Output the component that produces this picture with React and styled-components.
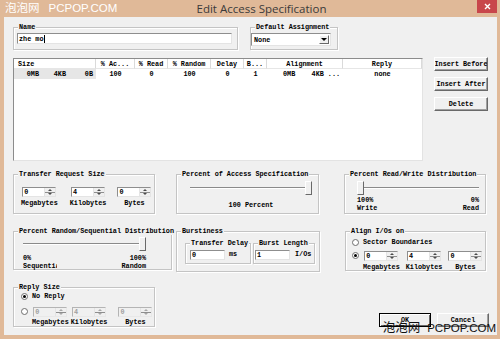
import React from "react";
import styled, { createGlobalStyle } from "styled-components";

const MONO = `"Liberation Mono", "DejaVu Sans Mono", monospace`;
const MARK = `"Liberation Sans", "Noto Sans CJK SC", sans-serif`;

const GlobalStyle = createGlobalStyle`
  html, body {
    margin: 0;
    padding: 0;
  }
  body {
    width: 500px;
    height: 339px;
    overflow: hidden;
    background: #e0b998;
  }
`;

const Window = styled.div`
  position: relative;
  width: 500px;
  height: 339px;
  display: flex;
  flex-direction: column;
  background: #e0b998;
  overflow: hidden;
`;

const TitleBar = styled.div`
  display: flex;
  height: 17px;
  flex-shrink: 0;
`;

const Title = styled.div`
  flex: 1;
  padding-left: 46px;
  display: flex;
  align-items: center;
  justify-content: center;
  font-family: "Open Sans", "Noto Sans", sans-serif;
  font-size: 11.5px;
  color: #3a3a3a;
`;

const CloseButton = styled.div`
  width: 20px;
  height: 13px;
  margin-right: 3px;
  background: #c8464b;
  display: flex;
  align-items: center;
  justify-content: center;
`;

const TopMark = styled.div`
  position: absolute;
  left: 5px;
  top: 2px;
  font-family: ${MARK};
  font-size: 11.5px;
  line-height: 13px;
  color: #fff;
  white-space: nowrap;
  pointer-events: none;
`;

const BottomMark = styled.div`
  position: absolute;
  right: 4px;
  bottom: 3px;
  font-family: ${MARK};
  font-size: 11.5px;
  line-height: 15px;
  color: #111;
  white-space: nowrap;
  pointer-events: none;
`;

const MarkCjk = styled.span`
  font-size: ${p => p.$size}px;
  margin-right: ${p => p.$gap}px;
`;

const Client = styled.div`
  flex: 1;
  margin: 0 3px 4px 4px;
  padding-left: 9px;
  background: #f0f0f0;
  display: flex;
  flex-direction: column;
  font-family: ${MONO};
  font-size: 6.8px;
  font-weight: bold;
  line-height: 8px;
  color: #000;
`;

const Row = styled.div`
  display: flex;
  align-items: ${p => p.$align || "flex-start"};
  flex-shrink: 0;
  margin-top: ${p => p.$mt}px;
  height: ${p => p.$h}px;
`;

const Group = styled.div`
  position: relative;
  box-sizing: border-box;
  flex-shrink: 0;
  display: flex;
  flex-direction: ${p => (p.$row ? "row" : "column")};
  align-items: flex-start;
  width: ${p => p.$w}px;
  height: ${p => p.$h}px;
  margin-left: ${p => p.$ml || 0}px;
  padding: ${p => p.$pt || 0}px 0 0 ${p => p.$pl || 0}px;
  border: 1px solid #c4c4c4;
  box-shadow: inset 1px 1px 0 #fff, 1px 1px 0 #fff;
`;

const Legend = styled.span`
  position: absolute;
  top: -5px;
  left: 4px;
  padding: 0 1px;
  background: #f0f0f0;
  white-space: nowrap;
`;

const Line = styled.div`
  display: flex;
  align-items: ${p => p.$align || "center"};
  margin-top: ${p => p.$mt || 0}px;
  white-space: nowrap;
`;

const Text = styled.span`
  margin-left: ${p => p.$ml || 0}px;
  white-space: nowrap;
`;

const Edit = styled.div`
  box-sizing: border-box;
  display: flex;
  align-items: center;
  width: ${p => p.$w}px;
  height: ${p => p.$h || 10}px;
  padding-left: 1px;
  background: #fff;
  border: 1px solid;
  border-color: #8e8e8e #e4e4e4 #e4e4e4 #8e8e8e;
  white-space: pre;
`;

const Caret = styled.span`
  width: 1px;
  height: 8px;
  background: #000;
  margin-left: 1px;
`;

const Select = styled.div`
  box-sizing: border-box;
  display: flex;
  width: 80px;
  height: 13px;
  background: #fff;
  border: 1px solid;
  border-color: #8e8e8e #e4e4e4 #e4e4e4 #8e8e8e;
`;

const SelectValue = styled.div`
  flex: 1;
  display: flex;
  align-items: center;
  padding-left: 2px;
`;

const DropButton = styled.div`
  box-sizing: border-box;
  width: 10px;
  margin: 1px;
  background: #f0f0f0;
  border: 1px solid;
  border-color: #fff #696969 #696969 #fff;
  display: flex;
  align-items: center;
  justify-content: center;

  &::after {
    content: "";
    border-left: 3px solid transparent;
    border-right: 3px solid transparent;
    border-top: 3px solid #000;
  }
`;

const ListView = styled.div`
  box-sizing: border-box;
  width: 410px;
  height: 103px;
  flex-shrink: 0;
  background: #fff;
  border: 1px solid;
  border-color: #8c8c8c #e3e3e3 #e3e3e3 #8c8c8c;
`;

const ListGrid = styled.div`
  display: grid;
  grid-template-columns: 82px 39px 33px 43px 33px 23px 76px 79px;
  grid-auto-rows: 10px;
`;

const HeadCell = styled.div`
  display: flex;
  align-items: center;
  justify-content: ${p => (p.$left ? "flex-start" : "center")};
  padding-left: ${p => (p.$left ? 4 : 0)}px;
  border-right: 1px solid #dadada;
  border-bottom: 1px solid #e6e6e6;
  overflow: hidden;
  white-space: nowrap;
`;

const Cell = styled.div`
  display: flex;
  align-items: center;
  justify-content: ${p => (p.$left ? "flex-start" : "center")};
  padding-left: ${p => p.$pl || 0}px;
  background: ${p => p.$bg || "transparent"};
  overflow: hidden;
  white-space: pre;
`;

const SizeParts = styled.div`
  display: grid;
  grid-template-columns: repeat(3, 27px);
  width: 100%;
  height: 100%;
  background: #e6e6e6;
  align-items: center;

  span {
    text-align: right;
    padding-right: 2px;
  }
`;

const ButtonColumn = styled.div`
  display: flex;
  flex-direction: column;
  gap: 6px;
  margin-left: 11px;
  margin-top: -1px;
`;

const PushButton = styled.div`
  box-sizing: border-box;
  width: ${p => p.$w}px;
  height: 14px;
  margin-left: ${p => p.$ml || 0}px;
  display: flex;
  align-items: center;
  justify-content: center;
  overflow: hidden;
  white-space: nowrap;
  background: #f0f0f0;
  border: 1px solid;
  border-color: ${p => (p.$default ? "#000" : "#fff #696969 #696969 #fff")};
  box-shadow: ${p =>
    p.$default
      ? "inset 1px 1px 0 #fff, inset -1px -1px 0 #696969"
      : "inset -1px -1px 0 #a0a0a0"};
`;

const Field = styled.div`
  display: flex;
  flex-direction: column;
  align-items: center;
  margin-left: ${p => p.$ml || 0}px;
`;

const Caption = styled.div`
  margin-top: ${p => (p.$mt === undefined ? 2 : p.$mt)}px;
  white-space: nowrap;
`;

const Spin = styled.div`
  box-sizing: border-box;
  display: flex;
  width: 34px;
  height: 10px;
  border: 1px solid;
  border-color: ${p =>
    p.$disabled ? "#b4b4b4 #e8e8e8 #e8e8e8 #b4b4b4" : "#8e8e8e #e4e4e4 #e4e4e4 #8e8e8e"};
  background: ${p => (p.$disabled ? "#f0f0f0" : "#fff")};
  color: ${p => (p.$disabled ? "#a0a0a0" : "#000")};
`;

const SpinValue = styled.div`
  flex: 1;
  padding-left: 1px;
  line-height: 8px;
`;

const SpinArrows = styled.div`
  width: 10px;
  display: flex;
  flex-direction: column;
  border-left: 1px solid #e4e4e4;
`;

const SpinStep = styled.div`
  flex: 1;
  display: flex;
  align-items: center;
  justify-content: center;
  background: #f0f0f0;
  border-bottom: ${p => (p.$up ? "1px solid #8e8e8e" : "none")};

  &::after {
    content: "";
    border-left: 2px solid transparent;
    border-right: 2px solid transparent;
    ${p => (p.$up ? "border-bottom" : "border-top")}: 2px solid
      ${p => (p.$disabled ? "#a8a8a8" : "#4a4a4a")};
  }
`;

const Radio = styled.span`
  box-sizing: border-box;
  flex-shrink: 0;
  width: 7px;
  height: 7px;
  margin-top: ${p => p.$mt || 0}px;
  border-radius: 50%;
  border: 1px solid #6e6e6e;
  background: #fff;
  display: inline-flex;
  align-items: center;
  justify-content: center;

  &::after {
    content: "";
    width: 3px;
    height: 3px;
    border-radius: 50%;
    background: ${p => (p.$on ? "#000" : "transparent")};
  }
`;

const SliderColumn = styled.div`
  display: flex;
  flex-direction: column;
  align-items: ${p => p.$align || "stretch"};
  width: ${p => p.$w}px;
`;

const Slider = styled.div`
  position: relative;
  height: 15px;
`;

const Track = styled.div`
  box-sizing: border-box;
  margin-top: 6px;
  height: 2px;
  border-top: 1px solid #8a8a8a;
  border-bottom: 1px solid #fff;
`;

const Thumb = styled.div`
  position: absolute;
  top: 0;
  box-sizing: border-box;
  width: 7px;
  height: 14px;
  background: #f0f0f0;
  border: 1px solid;
  border-color: #fff #696969 #696969 #fff;
`;

const Scale = styled.div`
  display: flex;
  justify-content: space-between;
  margin-top: ${p => p.$mt || 0}px;

  & > div:last-child {
    text-align: right;
  }
`;

const Clip = styled.span`
  display: inline-block;
  width: ${p => p.$w}px;
  overflow: hidden;
  white-space: nowrap;
  vertical-align: top;
`;

const SpinBox = ({ value, disabled }) => (
  <Spin $disabled={disabled}>
    <SpinValue>{value}</SpinValue>
    <SpinArrows>
      <SpinStep $up $disabled={disabled} />
      <SpinStep $disabled={disabled} />
    </SpinArrows>
  </Spin>
);

const SpinField = ({ value, label, ml, disabled, captionMt }) => (
  <Field $ml={ml}>
    <SpinBox value={value} disabled={disabled} />
    <Caption $mt={captionMt}>{label}</Caption>
  </Field>
);

const TrackBar = ({ at }) => (
  <Slider>
    <Track />
    <Thumb style={{ left: at }} />
  </Slider>
);

const columns = ["% Ac...", "% Read", "% Random", "Delay", "B...", "Alignment", "Reply"];

export default function App() {
  return (
    <>
      <GlobalStyle />
      <Window>
        <TitleBar>
          <Title>Edit Access Specification</Title>
          <CloseButton>
            <svg width="7" height="7" viewBox="0 0 7 7">
              <path d="M1 1L6 6M6 1L1 6" stroke="#fff" strokeWidth="1.4" />
            </svg>
          </CloseButton>
        </TitleBar>

        <Client>
          <Row $mt={10} $h={23}>
            <Group $w={225} $h={23} $pt={5} $pl={3}>
              <Legend>Name</Legend>
              <Edit $w={215} $h={11}>
                zhe mo<Caret />
              </Edit>
            </Group>
            <Group $w={88} $h={23} $ml={12} $pt={5}>
              <Legend>Default Assignment</Legend>
              <Select>
                <SelectValue>None</SelectValue>
                <DropButton />
              </Select>
            </Group>
          </Row>

          <Row $mt={8} $h={103}>
            <ListView>
              <ListGrid>
                <HeadCell $left>Size</HeadCell>
                {columns.map(c => (
                  <HeadCell key={c}>{c}</HeadCell>
                ))}
                <Cell>
                  <SizeParts>
                    <span>0MB</span>
                    <span>4KB</span>
                    <span>0B</span>
                  </SizeParts>
                </Cell>
                <Cell>100</Cell>
                <Cell>0</Cell>
                <Cell>100</Cell>
                <Cell>0</Cell>
                <Cell>1</Cell>
                <Cell $left $pl={16}>0MB    4KB ...</Cell>
                <Cell>none</Cell>
              </ListGrid>
            </ListView>
            <ButtonColumn>
              <PushButton $w={54}>Insert Before</PushButton>
              <PushButton $w={54}>Insert After</PushButton>
              <PushButton $w={54}>Delete</PushButton>
            </ButtonColumn>
          </Row>

          <Row $mt={13} $h={40}>
            <Group $w={142} $h={40} $row $pt={12} $pl={7}>
              <Legend>Transfer Request Size</Legend>
              <SpinField value="0" label="Megabytes" />
              <SpinField value="4" label="Kilobytes" ml={12} />
              <SpinField value="0" label="Bytes" ml={11} />
            </Group>
            <Group $w={143} $h={40} $ml={21} $pt={6} $pl={13}>
              <Legend>Percent of Access Specification</Legend>
              <SliderColumn $w={122}>
                <TrackBar at={115} />
                <Caption $mt={5} style={{ textAlign: "center" }}>
                  100 Percent
                </Caption>
              </SliderColumn>
            </Group>
            <Group $w={142} $h={40} $ml={25} $pt={6} $pl={12}>
              <Legend>Percent Read/Write Distribution</Legend>
              <SliderColumn $w={122}>
                <TrackBar at={0} />
                <Scale>
                  <div>
                    100%
                    <br />
                    Write
                  </div>
                  <div>
                    0%
                    <br />
                    Read
                  </div>
                </Scale>
              </SliderColumn>
            </Group>
          </Row>

          <Row $mt={17} $h={41}>
            <Group $w={159} $h={39} $pt={5} $pl={9}>
              <Legend>Percent Random/Sequential Distribution</Legend>
              <SliderColumn $w={123}>
                <TrackBar at={116} />
                <Scale $mt={2}>
                  <div>
                    0%
                    <br />
                    <Clip $w={34}>Sequential</Clip>
                  </div>
                  <div>
                    100%
                    <br />
                    Random
                  </div>
                </Scale>
              </SliderColumn>
            </Group>
            <Group $w={144} $h={41} $ml={4} $row $pt={11} $pl={8}>
              <Legend>Burstiness</Legend>
              <Group $w={66} $h={21} $row $pt={6} $pl={4}>
                <Legend>Transfer Delay</Legend>
                <Edit $w={35}>0</Edit>
                <Text $ml={4}>ms</Text>
              </Group>
              <Group $w={62} $h={21} $ml={2} $row $pt={6} $pl={1}>
                <Legend>Burst Length</Legend>
                <Edit $w={35}>1</Edit>
                <Text $ml={5}>I/Os</Text>
              </Group>
            </Group>
            <Group $w={141} $h={40} $ml={25} $pt={6} $pl={6}>
              <Legend>Align I/Os on</Legend>
              <Line>
                <Radio />
                <Text $ml={4}>Sector Boundaries</Text>
              </Line>
              <Line $mt={5} $align="flex-start">
                <Radio $on $mt={1} />
                <SpinField value="0" label="Megabytes" ml={4} />
                <SpinField value="4" label="Kilobytes" ml={6} />
                <SpinField value="0" label="Bytes" ml={6} />
              </Line>
            </Group>
          </Row>

          <Row $mt={15} $h={40} $align="flex-end">
            <Group $w={142} $h={40} $pt={4} $pl={7} style={{ alignSelf: "flex-start" }}>
              <Legend>Reply Size</Legend>
              <Line>
                <Radio $on />
                <Text $ml={4}>No Reply</Text>
              </Line>
              <Line $mt={7} $align="flex-start">
                <Radio $mt={1} />
                <SpinField value="0" label="Megabytes" ml={4} disabled captionMt={1} />
                <SpinField value="4" label="Kilobytes" ml={2} disabled captionMt={1} />
                <SpinField value="0" label="Bytes" ml={11} disabled captionMt={1} />
              </Line>
            </Group>
            <PushButton $w={52} $ml={224} $default>
              OK
            </PushButton>
            <PushButton $w={52} $ml={6}>
              Cancel
            </PushButton>
          </Row>
        </Client>

        <TopMark>
          <MarkCjk $size={11.5} $gap={9}>泡泡网</MarkCjk>PCPOP.COM
        </TopMark>
        <BottomMark>
          <MarkCjk $size={12.5} $gap={7}>泡泡网</MarkCjk>PCPOP.COM
        </BottomMark>
      </Window>
    </>
  );
}
